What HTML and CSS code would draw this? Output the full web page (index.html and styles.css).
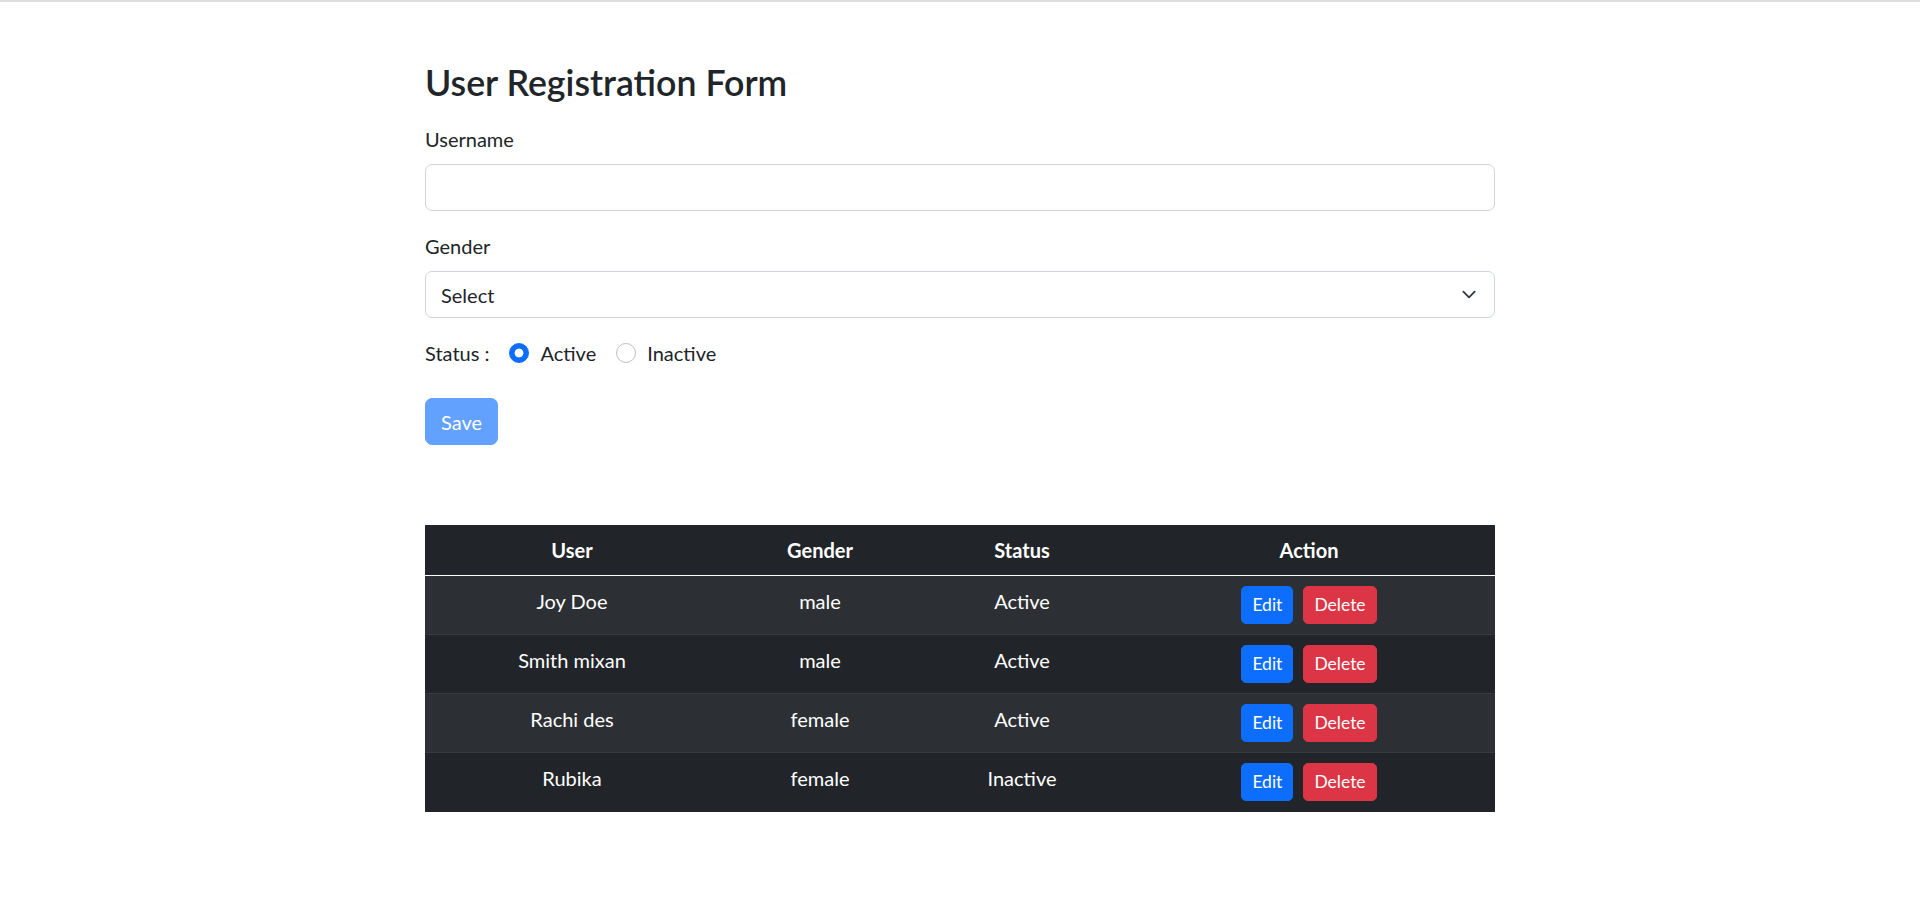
FILE: index.html
```html
<!DOCTYPE html>
<html lang="en">
<head>
<meta charset="utf-8">
<title>User Registration Form</title>
<link rel="stylesheet" href="styles.css">
</head>
<body>
<div class="page">
  <main class="container">
    <h3 class="title">User Registration Form</h3>
    <form class="form">
      <div class="field">
        <label class="label" for="username">Username</label>
        <input class="input" id="username" type="text">
      </div>
      <div class="field">
        <label class="label" for="gender">Gender</label>
        <div class="select-wrap">
          <select class="select" id="gender">
            <option>Select</option>
            <option>male</option>
            <option>female</option>
          </select>
          <svg class="chevron" width="20" height="15" viewBox="0 0 16 16" aria-hidden="true"><path d="M2 5l6 6 6-6" fill="none" stroke="#343a40" stroke-width="2" stroke-linecap="round" stroke-linejoin="round"/></svg>
        </div>
      </div>
      <div class="status-row">
        <span class="status-label">Status :</span>
        <label class="radio"><input type="radio" name="status" checked>Active</label>
        <label class="radio"><input type="radio" name="status">Inactive</label>
      </div>
      <button class="btn btn-save" type="button" disabled>Save</button>
    </form>

    <table class="table">
      <colgroup>
        <col class="col-user"><col class="col-gender"><col class="col-status"><col class="col-action">
      </colgroup>
      <thead>
        <tr><th>User</th><th>Gender</th><th>Status</th><th>Action</th></tr>
      </thead>
      <tbody>
        <tr><td>Joy Doe</td><td>male</td><td>Active</td><td><div class="actions"><button class="btn btn-sm btn-edit" type="button">Edit</button><button class="btn btn-sm btn-delete" type="button">Delete</button></div></td></tr>
        <tr><td>Smith mixan</td><td>male</td><td>Active</td><td><div class="actions"><button class="btn btn-sm btn-edit" type="button">Edit</button><button class="btn btn-sm btn-delete" type="button">Delete</button></div></td></tr>
        <tr><td>Rachi des</td><td>female</td><td>Active</td><td><div class="actions"><button class="btn btn-sm btn-edit" type="button">Edit</button><button class="btn btn-sm btn-delete" type="button">Delete</button></div></td></tr>
        <tr><td>Rubika</td><td>female</td><td>Inactive</td><td><div class="actions"><button class="btn btn-sm btn-edit" type="button">Edit</button><button class="btn btn-sm btn-delete" type="button">Delete</button></div></td></tr>
      </tbody>
    </table>
  </main>
</div>
</body>
</html>
```
FILE: styles.css
```css
* { box-sizing: border-box; }
html, body { margin: 0; padding: 0; }
body {
  font-family: "Segoe UI", Lato, "Noto Sans", sans-serif;
  font-size: 20px;
  line-height: 30px;
  color: #212529;
  background: #fff;
}
.page { border-top: 2px solid #dedede; min-height: 920px; }
.container { width: 1070px; margin: 0 auto; padding-top: 60px; }
.title { margin: 0 0 20px; font-size: 35.7px; line-height: 42px; font-weight: 600; }
.form { display: flex; flex-direction: column; align-items: flex-start; }
.field { width: 100%; margin-bottom: 20px; }
.label { display: block; margin-bottom: 10px; }
.input, .select {
  display: block; width: 100%; height: 47px; margin: 0;
  border: 1px solid #ced4da; border-radius: 7px; background: #fff;
  font: inherit; color: #212529; padding: 0 15px;
}
.select-wrap { display: grid; }
.select { grid-area: 1 / 1; appearance: none; -webkit-appearance: none; }
.chevron { grid-area: 1 / 1; justify-self: end; align-self: center; margin-right: 16px; pointer-events: none; }
.status-row { display: flex; align-items: center; height: 30px; margin-bottom: 30px; }
.status-label { margin-right: 20px; }
.radio { display: inline-flex; align-items: center; margin-right: 20px; }
.radio input {
  appearance: none; -webkit-appearance: none; margin: 0 11px 0 0;
  width: 20px; height: 20px; border-radius: 50%; border: 1px solid #bfbfbf; background: #fff;
}
.radio input:checked { border-color: #0d6efd; background: radial-gradient(circle, #fff 0 4px, #0d6efd 4.8px); }
.btn {
  font: inherit; border: 1px solid transparent; color: #fff; cursor: pointer;
  display: inline-flex; align-items: center; justify-content: center;
}
.btn-save { height: 47px; padding: 0 15px; border-radius: 7px; background: #62a1fe; border-color: #62a1fe; }
.table {
  width: 1070px; margin-top: 80px; border-collapse: collapse; table-layout: fixed;
  color: #fff; background: #212529; text-align: center;
}
.col-user { width: 294px; }
.col-gender { width: 202px; }
.col-status { width: 202px; }
.col-action { width: 372px; }
.table th { font-weight: 700; height: 49px; padding: 10px; border-bottom: 1px solid #fff; vertical-align: top; }
.table td { padding: 10px; height: 59px; border-bottom: 1px solid #373b3e; vertical-align: top; }
.table tbody tr:nth-child(odd) td { background: #2c3034; }
.table tbody tr:last-child td { border-bottom: 0; }
.actions { display: flex; justify-content: center; gap: 10px; }
.btn-sm { height: 38px; padding: 0 10px; font-size: 17.5px; border-radius: 5px; }
.btn-edit { background: #0d6efd; border-color: #0d6efd; }
.btn-delete { background: #dc3545; border-color: #dc3545; }
```
